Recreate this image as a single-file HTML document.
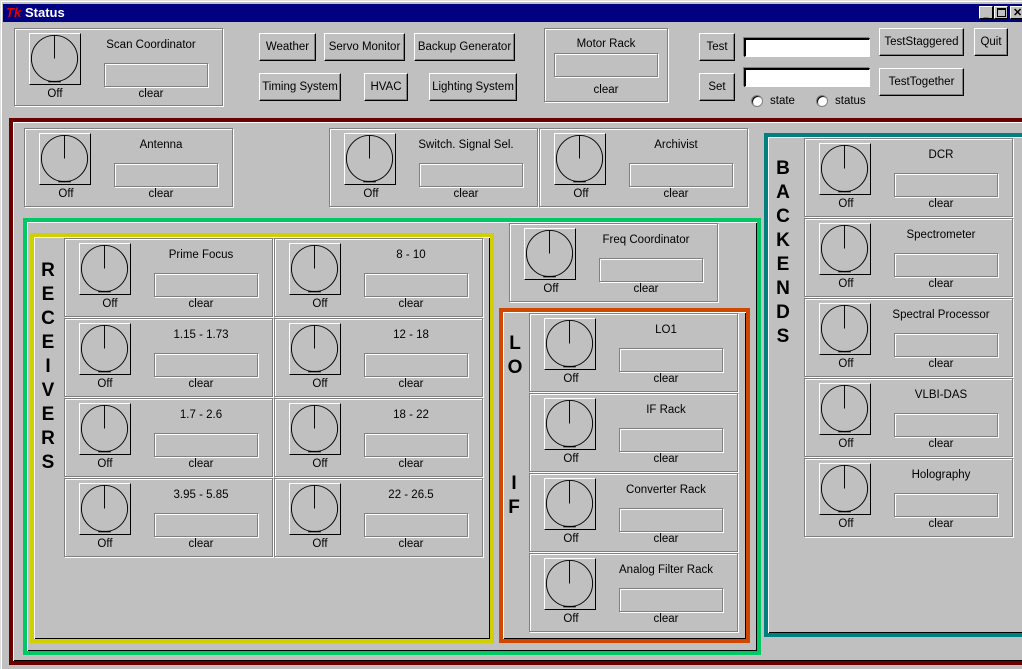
<!DOCTYPE html>
<html><head><meta charset="utf-8"><style>
*{box-sizing:border-box}
body{margin:0;width:1022px;height:669px;overflow:hidden;background:#c0c0c0;font-family:"Liberation Sans",Arial,sans-serif;font-size:11.5px;color:#000;position:relative}
.a{position:absolute}
.tb{left:3px;top:4px;width:1019px;height:18px;background:#000080;color:#fff;font-weight:bold;font-size:13px;line-height:18px;padding-left:22px}
.g{position:absolute;border:1px solid #808080;box-shadow:inset 1px 1px 0 #fff,1px 1px 0 #fff}
.w{position:absolute;width:209px;height:79px;border:1px solid #808080;box-shadow:inset 1px 1px 0 #fff,1px 1px 0 #fff}
.k{position:absolute;left:14px;top:4px;width:52px;height:52px;border-top:1px solid #fff;border-left:1px solid #fff;border-right:1px solid #000;border-bottom:1px solid #000}
.k svg{position:absolute;left:0;top:0}
.o{position:absolute;left:19px;width:52px;top:59px;text-align:center}
.t{position:absolute;left:60px;width:152px;top:10px;text-align:center}
.e{position:absolute;left:89px;top:34px;width:104px;height:24px;border:1px solid #808080;box-shadow:1px 1px 0 #fff,inset 1px 1px 0 #fff}
.c{position:absolute;left:84px;width:104px;top:59px;text-align:center}
.b{position:absolute;height:28px;border-top:1px solid #fff;border-left:1px solid #fff;border-right:1px solid #000;border-bottom:1px solid #000;box-shadow:inset -1px -1px 0 #808080;text-align:center;line-height:26px;white-space:nowrap}
.in{position:absolute;background:#fff;border-top:2px solid #000;border-left:2px solid #000;border-right:1px solid #fff;border-bottom:1px solid #fff;box-shadow:-1px -1px 0 #808080}
.f{position:absolute;border:4px solid;}
.f::after{content:"";position:absolute;left:0;top:0;right:0;bottom:0;box-shadow:inset 1px 1px 0 #fff,inset -1px -1px 0 #000}
.L{position:absolute;font-weight:bold;font-size:19px;width:20px;text-align:center;line-height:24px}
.r{position:absolute;width:12px;height:12px;border-radius:50%;background:#fff;border:1px solid #808080;box-shadow:inset 1px 1px 0 #000}
</style></head><body>
<svg width="0" height="0" style="position:absolute"><defs><symbol id="kn" viewBox="0 0 52 52"><circle cx="25.5" cy="25.5" r="24" fill="none" stroke="#000" stroke-width="1"/><line x1="25.5" y1="1.5" x2="25.5" y2="25.5" stroke="#000"/><line x1="19" y1="49.5" x2="32" y2="49.5" stroke="#000" stroke-width="1.5"/></symbol></defs></svg>
<div class="a" style="left:0;top:0;width:1022px;height:669px;border-left:1px solid #dfdfdf;border-top:1px solid #dfdfdf;box-shadow:inset 1px 1px 0 #fff"></div>
<div class="a tb">Status</div>
<div class="a" style="left:6px;top:4px;color:#e00000;font-weight:bold;font-style:italic;font-size:13px;line-height:18px">Tk</div>
<div class="a" style="left:979px;top:6px;width:14px;height:13px;background:#c0c0c0;border:1px solid;border-color:#fff #000 #000 #fff;font-size:9px;text-align:center;line-height:14px;font-weight:bold">_</div>
<div class="a" style="left:994px;top:6px;width:14px;height:13px;background:#c0c0c0;border:1px solid;border-color:#fff #000 #000 #fff"><div class="a" style="left:2px;top:1px;width:9px;height:9px;border:1px solid #000;border-top-width:2px"></div></div>
<div class="a" style="left:1010px;top:6px;width:14px;height:13px;background:#c0c0c0;border:1px solid;border-color:#fff #000 #000 #fff;font-size:11px;font-weight:bold;line-height:12px;padding-left:2px">✕</div>

<div class="w" style="left:14px;top:28px;height:78px"><div class="k"><svg width="50" height="50"><use href="#kn"/></svg></div><div class="t">Scan Coordinator</div><div class="e"></div><div class="o" style="left:14px">Off</div><div class="c">clear</div></div>
<div class="b" style="left:259px;top:33px;width:57px">Weather</div>
<div class="b" style="left:324px;top:33px;width:81px">Servo Monitor</div>
<div class="b" style="left:414px;top:33px;width:101px">Backup Generator</div>
<div class="b" style="left:259px;top:73px;width:82px">Timing System</div>
<div class="b" style="left:364px;top:73px;width:44px">HVAC</div>
<div class="b" style="left:429px;top:73px;width:88px">Lighting System</div>
<div class="g" style="left:544px;top:28px;width:124px;height:74px"><div class="a" style="left:0;width:122px;top:9px;text-align:center">Motor Rack</div><div class="e" style="left:9px;top:24px;width:104px;height:24px"></div><div class="a" style="left:0;width:122px;top:55px;text-align:center">clear</div></div>
<div class="b" style="left:699px;top:33px;width:36px">Test</div>
<div class="b" style="left:699px;top:73px;width:36px">Set</div>
<div class="in" style="left:744px;top:38px;width:126px;height:19px"></div>
<div class="in" style="left:744px;top:68px;width:126px;height:19px"></div>
<div class="r" style="left:751px;top:95px"></div><div class="a" style="left:770px;top:95px">state</div>
<div class="r" style="left:816px;top:95px"></div><div class="a" style="left:835px;top:95px">status</div>
<div class="b" style="left:879px;top:28px;width:85px">TestStaggered</div>
<div class="b" style="left:974px;top:28px;width:34px">Quit</div>
<div class="b" style="left:879px;top:68px;width:85px">TestTogether</div>

<div class="f" style="left:9px;top:118px;width:1020px;height:547px;border-color:#6b0000"></div>
<div class="f" style="left:23px;top:218px;width:738px;height:437px;border-color:#00c864"></div>
<div class="f" style="left:30px;top:233px;width:464px;height:410px;border-color:#d0d000"></div>
<div class="f" style="left:499px;top:308px;width:251px;height:335px;border-color:#d04800"></div>
<div class="f" style="left:764px;top:133px;width:265px;height:504px;border-color:#008080"></div>

<div class="w" style="left:24px;top:128px"><div class="k"><svg width="50" height="50"><use href="#kn"/></svg></div><div class="t">Antenna</div><div class="e"></div><div class="o" style="left:15px">Off</div><div class="c">clear</div></div>
<div class="w" style="left:329px;top:128px"><div class="k"><svg width="50" height="50"><use href="#kn"/></svg></div><div class="t">Switch. Signal Sel.</div><div class="e"></div><div class="o" style="left:15px">Off</div><div class="c">clear</div></div>
<div class="w" style="left:539px;top:128px"><div class="k"><svg width="50" height="50"><use href="#kn"/></svg></div><div class="t">Archivist</div><div class="e"></div><div class="o" style="left:15px">Off</div><div class="c">clear</div></div>

<div class="w" style="left:64px;top:238px"><div class="k"><svg width="50" height="50"><use href="#kn"/></svg></div><div class="t">Prime Focus</div><div class="e"></div><div class="o">Off</div><div class="c">clear</div></div>
<div class="w" style="left:274px;top:238px"><div class="k"><svg width="50" height="50"><use href="#kn"/></svg></div><div class="t">8 - 10</div><div class="e"></div><div class="o">Off</div><div class="c">clear</div></div>
<div class="w" style="left:64px;top:318px"><div class="k"><svg width="50" height="50"><use href="#kn"/></svg></div><div class="t">1.15 - 1.73</div><div class="e"></div><div class="o" style="left:14px">Off</div><div class="c">clear</div></div>
<div class="w" style="left:274px;top:318px"><div class="k"><svg width="50" height="50"><use href="#kn"/></svg></div><div class="t">12 - 18</div><div class="e"></div><div class="o">Off</div><div class="c">clear</div></div>
<div class="w" style="left:64px;top:398px"><div class="k"><svg width="50" height="50"><use href="#kn"/></svg></div><div class="t">1.7 - 2.6</div><div class="e"></div><div class="o" style="left:14px">Off</div><div class="c">clear</div></div>
<div class="w" style="left:274px;top:398px"><div class="k"><svg width="50" height="50"><use href="#kn"/></svg></div><div class="t">18 - 22</div><div class="e"></div><div class="o">Off</div><div class="c">clear</div></div>
<div class="w" style="left:64px;top:478px"><div class="k"><svg width="50" height="50"><use href="#kn"/></svg></div><div class="t">3.95 - 5.85</div><div class="e"></div><div class="o" style="left:14px">Off</div><div class="c">clear</div></div>
<div class="w" style="left:274px;top:478px"><div class="k"><svg width="50" height="50"><use href="#kn"/></svg></div><div class="t">22 - 26.5</div><div class="e"></div><div class="o">Off</div><div class="c">clear</div></div>

<div class="w" style="left:509px;top:223px"><div class="k"><svg width="50" height="50"><use href="#kn"/></svg></div><div class="t">Freq Coordinator</div><div class="e"></div><div class="o" style="left:15px">Off</div><div class="c">clear</div></div>

<div class="w" style="left:529px;top:313px"><div class="k"><svg width="50" height="50"><use href="#kn"/></svg></div><div class="t">LO1</div><div class="e"></div><div class="o" style="left:15px">Off</div><div class="c">clear</div></div>
<div class="w" style="left:529px;top:393px"><div class="k"><svg width="50" height="50"><use href="#kn"/></svg></div><div class="t">IF Rack</div><div class="e"></div><div class="o" style="left:15px">Off</div><div class="c">clear</div></div>
<div class="w" style="left:529px;top:473px"><div class="k"><svg width="50" height="50"><use href="#kn"/></svg></div><div class="t">Converter Rack</div><div class="e"></div><div class="o" style="left:15px">Off</div><div class="c">clear</div></div>
<div class="w" style="left:529px;top:553px"><div class="k"><svg width="50" height="50"><use href="#kn"/></svg></div><div class="t">Analog Filter Rack</div><div class="e"></div><div class="o" style="left:15px">Off</div><div class="c">clear</div></div>

<div class="w" style="left:804px;top:138px"><div class="k"><svg width="50" height="50"><use href="#kn"/></svg></div><div class="t">DCR</div><div class="e"></div><div class="o" style="left:15px">Off</div><div class="c">clear</div></div>
<div class="w" style="left:804px;top:218px"><div class="k"><svg width="50" height="50"><use href="#kn"/></svg></div><div class="t">Spectrometer</div><div class="e"></div><div class="o" style="left:15px">Off</div><div class="c">clear</div></div>
<div class="w" style="left:804px;top:298px"><div class="k"><svg width="50" height="50"><use href="#kn"/></svg></div><div class="t">Spectral Processor</div><div class="e"></div><div class="o" style="left:15px">Off</div><div class="c">clear</div></div>
<div class="w" style="left:804px;top:378px"><div class="k"><svg width="50" height="50"><use href="#kn"/></svg></div><div class="t">VLBI-DAS</div><div class="e"></div><div class="o" style="left:15px">Off</div><div class="c">clear</div></div>
<div class="w" style="left:804px;top:458px"><div class="k"><svg width="50" height="50"><use href="#kn"/></svg></div><div class="t">Holography</div><div class="e"></div><div class="o" style="left:15px">Off</div><div class="c">clear</div></div>

<div class="L" style="left:38px;top:259px">R<br>E<br>C<br>E<br>I<br>V<br>E<br>R<br>S</div>
<div class="L" style="left:505px;top:332px">L<br>O</div>
<div class="L" style="left:504px;top:472px">I<br>F</div>
<div class="L" style="left:773px;top:157px">B<br>A<br>C<br>K<br>E<br>N<br>D<br>S</div>
</body></html>
